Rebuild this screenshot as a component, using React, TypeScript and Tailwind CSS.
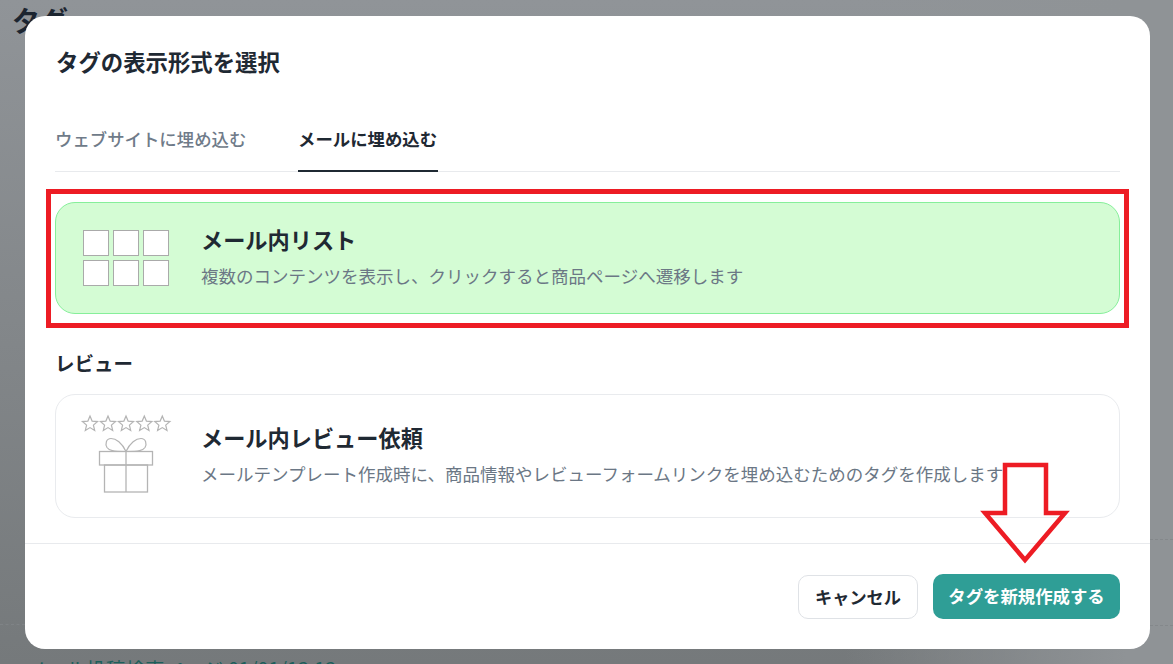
const font = { fontFamily: '"Noto Sans CJK JP", "Noto Sans", sans-serif' }

const starPoints = (cx: number, cy: number, r: number) =>
  Array.from({ length: 10 }, (_, i) => {
    const radius = i % 2 === 0 ? r : r * 0.45
    const angle = (Math.PI / 5) * i - Math.PI / 2
    return `${(cx + radius * Math.cos(angle)).toFixed(2)},${(cy + radius * Math.sin(angle)).toFixed(2)}`
  }).join(' ')

const GridIcon = () => (
  <div className="grid w-[86px] shrink-0 grid-cols-3 gap-1">
    {[0, 1, 2, 3, 4, 5].map((i) => (
      <div key={i} className="h-[26px] w-[26px] border border-[#aaaaaa] bg-white" />
    ))}
  </div>
)

const GiftIcon = () => (
  <div className="mb-[4px] flex w-[86px] shrink-0 justify-center">
    <svg width="92" height="80" viewBox="0 0 92 80" fill="none" className="shrink-0" stroke="#b4b4b4" strokeWidth="1.2">
      {[10, 28, 46, 64.3, 82.3].map((x) => (
        <polygon key={x} points={starPoints(x, 10, 8)} />
      ))}
      <rect x="19.5" y="37.5" width="53" height="13.5" strokeWidth="1.3" />
      <rect x="24.5" y="51" width="43" height="27" strokeWidth="1.3" />
      <path d="M46 37.5V78" strokeWidth="1.3" />
      <path d="M46 37.5C42 29 36 24.5 31 24.5C26 24.5 25 30 27 33.5C29 36.5 33 37.5 46 37.5Z" />
      <path d="M46 37.5C50 29 56 24.5 61 24.5C66 24.5 67 30 65 33.5C63 36.5 59 37.5 46 37.5Z" />
    </svg>
  </div>
)

const OptionCard = ({ icon, title, desc, active, className }: { icon: React.ReactNode; title: string; desc: string; active?: boolean; className: string }) => (
  <div className={`flex items-center gap-[32px] rounded-[20px] border pl-[27px] ${active ? 'border-[#86ef9a] bg-[#d4fcd4]' : 'border-[#e9ebee] bg-white'} ${className}`}>
    {icon}
    <div className="mb-[5px] flex flex-col">
      <h3 className="text-[22.2px] leading-[30px] font-bold text-[#1f2933]">{title}</h3>
      <p className="mt-[10px] text-[17.5px] leading-[24px] whitespace-nowrap text-[#6b7785]">{desc}</p>
    </div>
  </div>
)

export default function App() {
  return (
    <div style={font} className="relative h-[664px] w-full overflow-hidden bg-[linear-gradient(to_right,transparent_72%,#8f9396_96%),linear-gradient(to_bottom,#909498,#75797b)]">
      {/* page behind the dialog */}
      <h1 className="pl-[12px] pt-[1px] text-[28px] leading-[38px] font-bold text-[#1c2530]">タグ</h1>
      <div className="absolute bottom-[-15px] left-[27px] text-[19.7px] leading-[20px] text-[#1d5f5b]">メール投稿検索ページ 01/01/13:13</div>
      <div className="absolute left-0 top-[624px] w-[25px] border-t border-dashed border-[#7f8386]" />
      <div className="absolute right-0 top-[539px] w-[23px] border-t border-dashed border-[#84888b]" />
      <div className="absolute right-0 top-[625px] w-[23px] border-t border-dashed border-[#84888b]" />

      {/* dialog */}
      <div className="absolute left-[25px] top-[16px] flex h-[633px] w-[1125px] flex-col rounded-[20px] bg-white">
        <div className="flex-1 px-[30px]">
          <h2 className="ml-[1px] pt-[30px] text-[22.4px] leading-[30px] font-bold text-[#1f2933]">タグの表示形式を選択</h2>
          <div className="mt-[48px] flex h-[48px] gap-[51px] border-b border-[#e8eaed]">
            <div className="w-[192px] pt-[3px] text-[17.4px] leading-[24px] font-medium whitespace-nowrap text-[#6f7b89]">ウェブサイトに埋め込む</div>
            <div className="h-[48px] w-[140px] border-b-2 border-[#1f2933] pt-[3px] text-[17.4px] leading-[24px] font-bold whitespace-nowrap text-[#1f2933]">メールに埋め込む</div>
          </div>
          <OptionCard className="mt-[30px] h-[112px]" active icon={<GridIcon />} title="メール内リスト" desc="複数のコンテンツを表示し、クリックすると商品ページへ遷移します" />
          <h4 className="mt-[35px] text-[19.5px] leading-[28px] font-bold text-[#1f2933]">レビュー</h4>
          <OptionCard className="mt-[17px] h-[124px]" icon={<GiftIcon />} title="メール内レビュー依頼" desc="メールテンプレート作成時に、商品情報やレビューフォームリンクを埋め込むためのタグを作成します" />
        </div>
        <div className="flex h-[106px] items-start justify-end gap-[15px] border-t border-[#e8eaed] px-[30px] pt-[30px]">
          <button className="mt-[1px] h-[44px] w-[120px] rounded-[10px] border border-[#dfe2e6] bg-white text-[17.2px] font-bold text-[#1f2933]">キャンセル</button>
          <button className="h-[45px] w-[187px] rounded-[10px] bg-[#2f9e96] text-[17.4px] font-bold text-white">タグを新規作成する</button>
        </div>
      </div>

      {/* red annotations */}
      <div className="absolute left-[46px] top-[189px] h-[139px] w-[1083px] border-[5px] border-[#ed1c24]" />
      <svg className="absolute left-[975px] top-[455px]" width="100" height="115" viewBox="0 0 100 115" fill="none">
        <path d="M30 10H71V58H90L50 105L10 58H30Z" stroke="#ed1c24" strokeWidth="4.5" />
      </svg>
    </div>
  )
}
